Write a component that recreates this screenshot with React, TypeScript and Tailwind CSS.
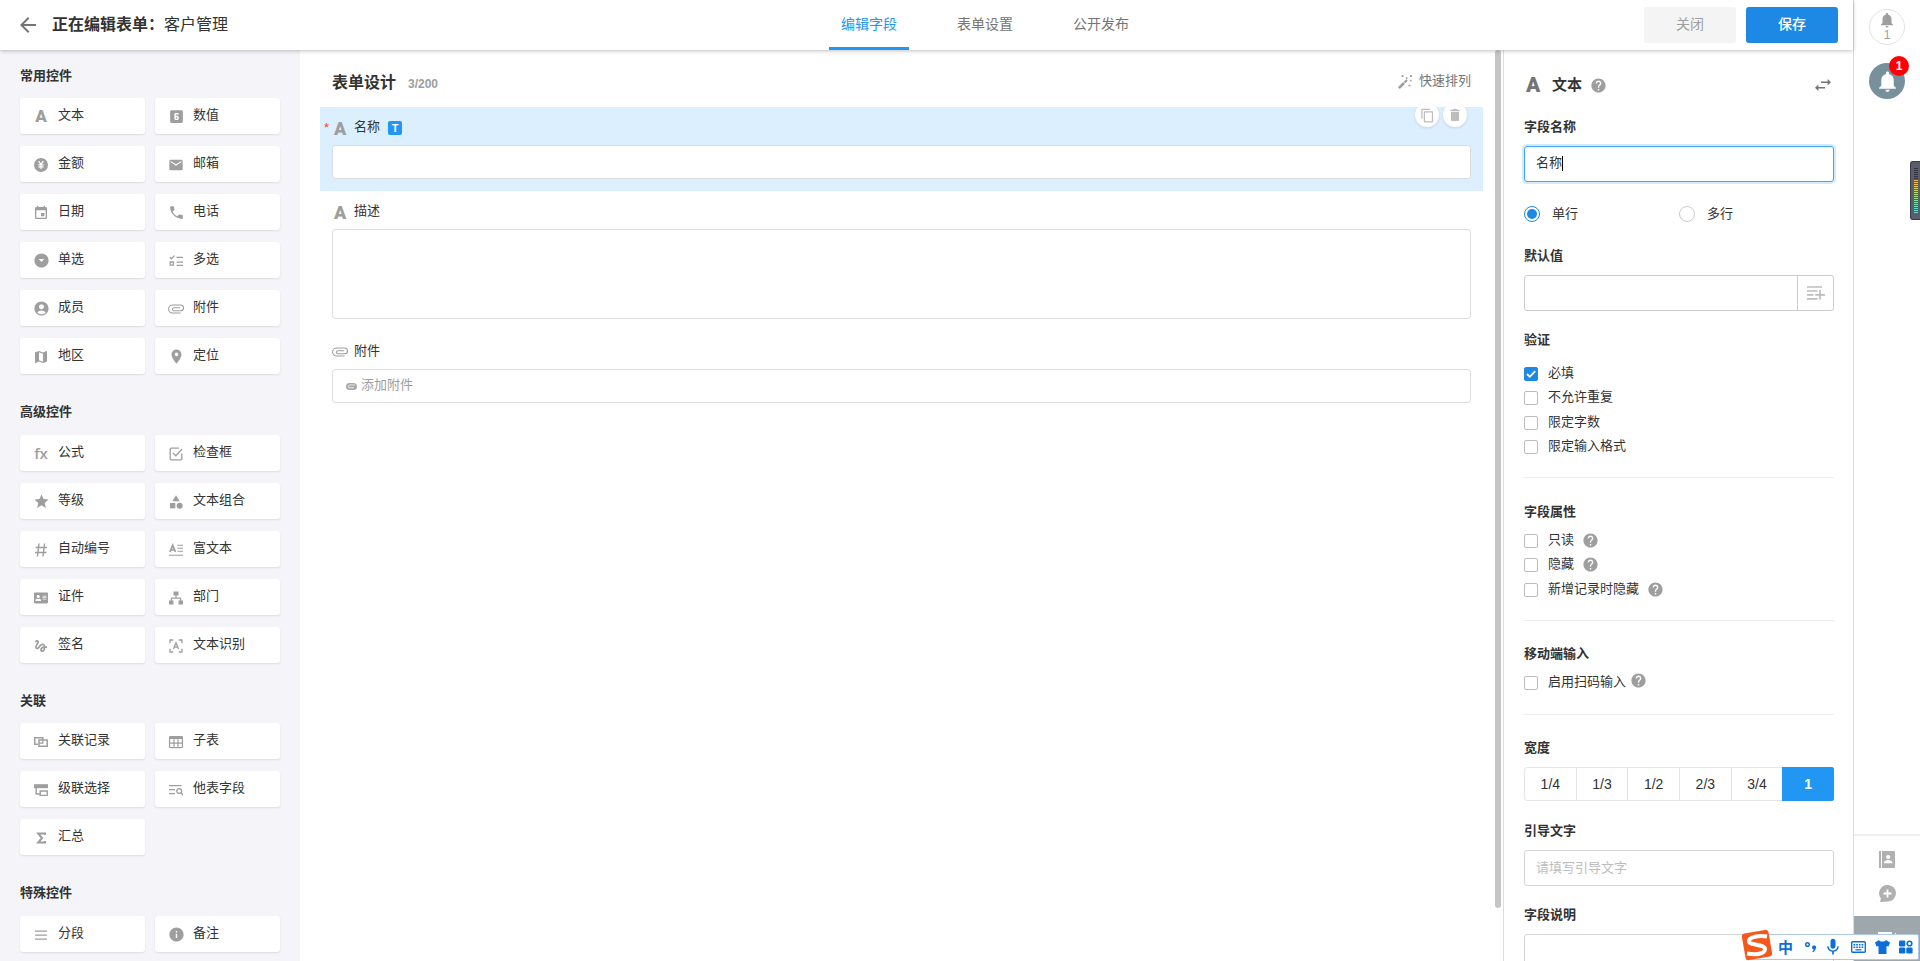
import { useState } from "react";
import type { ReactNode } from "react";
import clsx from "clsx";
import {
  MdAccountCircle,
  MdArrowBack,
  MdArrowDropDownCircle,
  MdCategory,
  MdContentCopy,
  MdDelete,
  MdEmail,
  MdEvent,
  MdGesture,
  MdHelp,
  MdInfo,
  MdLooks6,
  MdMap,
  MdMic,
  MdNotifications,
  MdPhone,
  MdPlace,
  MdStar,
  MdVideocam,
} from "react-icons/md";
import { FaAddressCard } from "react-icons/fa";

type Control = { name: string; icon: ReactNode };
type ControlGroup = { title: string; titleClass: string; controls: Control[] };

function LetterA({ className }: { className?: string }) {
  return <span className={clsx("font-[Roboto,sans-serif] font-black leading-none", className)}>A</span>;
}

function Glyph({ children, size = 14 }: { children: ReactNode; size?: number }) {
  return (
    <svg width={size} height={size} viewBox="0 0 14 14" fill="none" stroke="currentColor" strokeWidth="1.3">
      {children}
    </svg>
  );
}

function ClipIcon({ className }: { className?: string }) {
  return (
    <svg width="16" height="10" viewBox="0 0 16 10" fill="none" stroke="currentColor" strokeWidth="1.1" className={className}>
      <path d="M12.5 9H4.6a4 4 0 0 1 0-8h8a2.8 2.8 0 0 1 0 5.800H6a1.500 1.500 0 0 1 0-3.100h6" />
    </svg>
  );
}

const yenIcon = (
  <Glyph>
    <circle cx="7" cy="7" r="7" fill="currentColor" stroke="none" />
    <path d="M4.6 3.2 7 6.4l2.4-3.2M7 6.4v4.6M4.4 6.8h5.2M4.4 8.8h5.2" stroke="#fff" strokeWidth="1.2" />
  </Glyph>
);

const multiSelectIcon = (
  <Glyph>
    <path d="M.8 3.2l1.6 1.6L5.6 1.6M7.5 3.4H14M7.5 8.2H14M7.5 11.4H14" />
    <path d="M1.2 8h3.2v3.2H1.2z" />
  </Glyph>
);

const checkBoxIcon = (
  <Glyph>
    <path d="M10 1.2H2.2a1 1 0 0 0-1 1v9.6a1 1 0 0 0 1 1h9.6a1 1 0 0 0 1-1V6.5" />
    <path d="M4 6l2.8 2.8L13 2" />
  </Glyph>
);

const hashIcon = (
  <Glyph>
    <path d="M5 .5l-1.600 13M10.600.5L9 13.500M1.500 4.500h11.500M1 9.500h11.500" strokeWidth="1.4" />
  </Glyph>
);

const richTextIcon = (
  <Glyph>
    <path d="M.9 9 3.7 2.2 6.5 9M2 7h3.5" strokeWidth="1.7" />
    <path d="M8.5 2.2H14M8.5 5.2H14M8.5 8.2H14M0 12.2h14" strokeWidth="1.1" />
  </Glyph>
);

const orgIcon = (
  <Glyph>
    <path d="M4.500.500h5v4h-5zM0 9.500h4.500v4H0zM9.500 9.500H14v4H9.500z" fill="currentColor" stroke="none" />
    <path d="M7 4v3M2.400 10V7.200h9.200V10" strokeWidth="1.2" />
  </Glyph>
);

const ocrIcon = (
  <Glyph>
    <path d="M1 4.2V1h3.2M9.8 1H13v3.2M13 9.8V13H9.8M4.2 13H1V9.8" />
    <path d="M4.4 10 7 4l2.6 6M5.3 8.2h3.4" />
  </Glyph>
);

const relationIcon = (
  <Glyph>
    <path d="M4 9.2H.8V2.8h8v2" strokeWidth="1.5" />
    <path d="M5 5h8.2v6.2H5z" strokeWidth="1.5" />
    <path d="M8.8 4.8v3.4H5" />
  </Glyph>
);

const tableIcon = (
  <Glyph>
    <path d="M1.500 1h11A1.500 1.500 0 0 1 14 2.500V4H0V2.500A1.500 1.500 0 0 1 1.500 1z" fill="currentColor" stroke="none" />
    <rect x=".6" y="1.600" width="12.800" height="11" rx="1" strokeWidth="1.2" />
    <path d="M.6 8.200h12.800M5 4v8.600M9 4v8.600" strokeWidth="1.2" />
  </Glyph>
);

const cascadeIcon = (
  <Glyph>
    <path d="M0 1.2h14v4H0z" fill="currentColor" stroke="none" />
    <path d="M2.2 5v6H6M6.2 8h7v4.4h-7z" strokeWidth="1.4" />
  </Glyph>
);

const lookupIcon = (
  <Glyph>
    <path d="M0 2.6h12.5M0 6.6h6M0 10.6h6" />
    <circle cx="10.2" cy="8" r="2.4" />
    <path d="M12 9.8l2.2 2.4" />
  </Glyph>
);

const sumIcon = (
  <Glyph>
    <path d="M11 4V2.500H4.200L8 7l-3.800 4.500H11V10" strokeWidth="2" />
  </Glyph>
);

const dividerIcon = (
  <Glyph>
    <path d="M1 3.2h12M1 7.2h12M1 11.2h12" strokeWidth="1.2" />
  </Glyph>
);

const groups: ControlGroup[] = [
  {
    title: "常用控件",
    titleClass: "mt-[13px] mb-[11px]",
    controls: [
      { name: "文本", icon: <LetterA className="text-[17px]" /> },
      { name: "数值", icon: <MdLooks6 size={17} /> },
      { name: "金额", icon: yenIcon },
      { name: "邮箱", icon: <MdEmail size={16} /> },
      { name: "日期", icon: <MdEvent size={16} /> },
      { name: "电话", icon: <MdPhone size={17} /> },
      { name: "单选", icon: <MdArrowDropDownCircle size={17} /> },
      { name: "多选", icon: multiSelectIcon },
      { name: "成员", icon: <MdAccountCircle size={17} /> },
      { name: "附件", icon: <ClipIcon /> },
      { name: "地区", icon: <MdMap size={16} /> },
      { name: "定位", icon: <MdPlace size={17} /> },
    ],
  },
  {
    title: "高级控件",
    titleClass: "mt-[25px] mb-3",
    controls: [
      { name: "公式", icon: <span className="font-['Open_Sans',sans-serif] text-[15px] font-semibold leading-none">fx</span> },
      { name: "检查框", icon: checkBoxIcon },
      { name: "等级", icon: <MdStar size={17} /> },
      { name: "文本组合", icon: <MdCategory size={16} /> },
      { name: "自动编号", icon: hashIcon },
      { name: "富文本", icon: richTextIcon },
      { name: "证件", icon: <FaAddressCard size={14} /> },
      { name: "部门", icon: orgIcon },
      { name: "签名", icon: <MdGesture size={16} /> },
      { name: "文本识别", icon: ocrIcon },
    ],
  },
  {
    title: "关联",
    titleClass: "mt-[25px] mb-[11px]",
    controls: [
      { name: "关联记录", icon: relationIcon },
      { name: "子表", icon: tableIcon },
      { name: "级联选择", icon: cascadeIcon },
      { name: "他表字段", icon: lookupIcon },
      { name: "汇总", icon: sumIcon },
    ],
  },
  {
    title: "特殊控件",
    titleClass: "mt-[25px] mb-3",
    controls: [
      { name: "分段", icon: dividerIcon },
      { name: "备注", icon: <MdInfo size={17} /> },
    ],
  },
];

const tabs = ["编辑字段", "表单设置", "公开发布"];
const widths = ["1/4", "1/3", "1/2", "2/3", "3/4", "1"];

function Header() {
  const [active, setActive] = useState(tabs[0]);

  return (
    <header className="relative z-10 flex h-[50px] shrink-0 bg-white shadow-[0_1px_4px_rgba(0,0,0,0.25)]">
      <div className="flex w-[829px] items-center pl-4 text-[16px] text-[#333]">
        <MdArrowBack size={24} className="mr-3 text-[#757575]" />
        <span className="font-bold">正在编辑表单：</span>
        <span>客户管理</span>
      </div>
      <nav className="flex flex-1 gap-9">
        {tabs.map((tab) => (
          <button
            key={tab}
            onClick={() => setActive(tab)}
            className={clsx(
              "h-[50px] w-20 border-b-[3px] pt-[2px] text-[14px]",
              active === tab ? "border-[#2196f3] text-[#2196f3]" : "border-transparent text-[#757575]"
            )}
          >
            {tab}
          </button>
        ))}
      </nav>
      <div className="flex items-center gap-[10px] pr-[15px] text-[14px]">
        <button className="h-9 w-[92px] rounded-[3px] bg-[#f4f4f4] pb-px text-[#9e9e9e]">关闭</button>
        <button className="h-9 w-[92px] rounded-[3px] bg-[#1e88e5] pb-px font-medium text-white">保存</button>
      </div>
    </header>
  );
}

function Sidebar() {
  return (
    <aside className="w-[300px] shrink-0 overflow-hidden bg-[#f4f4f9] px-5">
      {groups.map((group) => (
        <section key={group.title}>
          <h2 className={clsx("h-6 text-[13px] font-bold leading-[25px] text-[#333]", group.titleClass)}>
            {group.title}
          </h2>
          <div className="grid grid-cols-[125px_125px] gap-x-[10px] gap-y-3">
            {group.controls.map((control) => (
              <div
                key={control.name}
                className="flex h-9 items-center rounded-[3px] bg-white pl-3 shadow-[0_1px_2px_rgba(0,0,0,0.1)]"
              >
                <span className="mr-2 flex w-[18px] shrink-0 items-center justify-center pt-px text-[#9e9e9e]">
                  {control.icon}
                </span>
                <span className="pb-[2px] text-[13px] text-[#333]">{control.name}</span>
              </div>
            ))}
          </div>
        </section>
      ))}
    </aside>
  );
}

function FormCanvas() {
  return (
    <main className="flex min-w-0 flex-1 bg-white">
      <div className="flex-1 pl-5 pr-3">
        <div className="flex h-[57px] items-center pl-3 pr-3 pt-[6px]">
          <h1 className="pt-[2px] text-[16px] font-bold text-[#333]">表单设计</h1>
          <span className="ml-3 pt-1 text-[12px] font-bold text-[#9e9e9e]">3/200</span>
          <button className="ml-auto flex items-center pb-px text-[13px] text-[#757575]">
            <svg width="14" height="14" viewBox="0 0 14 14" className="mt-[2px] mr-[7px] text-[#9e9e9e]" stroke="currentColor">
              <path d="M.9 13.100 6 8" strokeWidth="2.600" />
              <path d="M6.500 7.500 9 5" strokeWidth="2.200" />
              <path d="M3.500 1.200h2M12 1.200h2M12 5.500h1.600M7 1.200h0M10.500 10.500h2M8 3.200h1.400" strokeWidth="1.700" />
            </svg>
            快速排列
          </button>
        </div>

        <div className="relative h-[84px] bg-[#dceffe] px-3 pt-[10px]">
          <div className="flex h-[22px] items-center">
            <span className="absolute left-[4px] text-[13px] text-[#f44336]">*</span>
            <LetterA className="w-[22px] pl-[2px] pt-px text-[18px] text-[#9e9e9e]" />
            <span className="pb-[2px] text-[13px] text-[#333]">名称</span>
            <span className="ml-2 flex size-[14px] items-center justify-center rounded-[2px] bg-[#2196f3] text-[11px] font-bold leading-none text-white">
              T
            </span>
          </div>
          <input className="mt-[6px] block h-[34px] w-full rounded-[3px] border border-[#ddd] bg-white" />
          <div className="absolute -top-1 right-4 flex gap-1">
            <button className="flex size-6 items-center justify-center rounded-full bg-white text-[#bdbdbd] shadow-[0_1px_3px_rgba(0,0,0,0.12)]">
              <MdContentCopy size={15} />
            </button>
            <button className="flex size-6 items-center justify-center rounded-full bg-white text-[#bdbdbd] shadow-[0_1px_3px_rgba(0,0,0,0.12)]">
              <MdDelete size={16} />
            </button>
          </div>
        </div>

        <div className="px-3 pt-[10px]">
          <div className="flex h-[22px] items-center">
            <LetterA className="w-[22px] pl-[2px] pt-px text-[18px] text-[#9e9e9e]" />
            <span className="pb-[2px] text-[13px] text-[#333]">描述</span>
          </div>
          <div className="mt-[6px] h-[90px] rounded-[3px] border border-[#ddd]" />
        </div>

        <div className="px-3 pt-[22px]">
          <div className="flex h-[22px] items-center">
            <ClipIcon className="mr-[6px] text-[#9e9e9e]" />
            <span className="pb-[2px] text-[13px] text-[#333]">附件</span>
          </div>
          <div className="mt-[6px] flex h-[34px] items-center rounded-[3px] border border-[#ddd] pl-[13px] text-[13px] text-[#9e9e9e]">
            <svg width="11" height="7" viewBox="0 0 11 7" className="mr-1">
              <rect width="11" height="7" rx="3.5" fill="#aaa" />
              <path d="M9 2H3.8a1.4 1.4 0 0 0 0 2.8H8" fill="none" stroke="#fff" strokeWidth=".7" />
            </svg>
            <span className="pb-[2px]">添加附件</span>
          </div>
        </div>
      </div>
      <div className="w-2 shrink-0 pr-[2px]">
        <div className="h-[858px] rounded-[3px] bg-[#c5c5c5]" />
      </div>
    </main>
  );
}

function Check({ label, checked, help, className }: { label: string; checked?: boolean; help?: string; className?: string }) {
  return (
    <div className={clsx("flex items-start", className)}>
      <span
        className={clsx(
          "flex size-[14px] items-center justify-center rounded-[2px] border",
          checked ? "border-[#1e88e5] bg-[#1e88e5]" : "border-[#bdbdbd] bg-white"
        )}
      >
        {checked && (
          <svg width="12" height="12" viewBox="0 0 12 12" fill="none" stroke="#fff" strokeWidth="1.8">
            <path d="M2 6l2.8 2.8L10.2 3.2" />
          </svg>
        )}
      </span>
      <span className="-mt-[3px] ml-[10px] text-[13px] leading-[18px]">{label}</span>
      {help && <MdHelp size={17} className={clsx("text-[#9e9e9e]", help)} />}
    </div>
  );
}

function Title({ children, className }: { children: ReactNode; className: string }) {
  return <h3 className={clsx("h-5 text-[13px] font-bold leading-5", className)}>{children}</h3>;
}

function FieldSettings() {
  const [width, setWidth] = useState("1");

  return (
    <aside className="w-[350px] shrink-0 overflow-hidden border-l border-[#ddd] bg-white pl-5 pr-[19px] text-[#333]">
      <div className="mt-6 flex h-[22px] items-center">
        <LetterA className="w-7 pl-[2px] pt-px text-[21px] text-[#757575]" />
        <span className="text-[15px] font-bold">文本</span>
        <MdHelp size={17} className="ml-2 text-[#9e9e9e]" />
        <svg width="16" height="12" viewBox="0 0 16 12" className="ml-auto mr-[3px] text-[#757575]" fill="currentColor">
          <path d="M12.6 0 16 3.3l-3.4 3.3V4.1H6V2.6h6.6zM3.4 5.4v2.5H10v1.5H3.4V12L0 8.7z" />
        </svg>
      </div>

      <Title className="mt-[21px]">字段名称</Title>
      <div className="mt-[9px] flex h-9 items-center rounded-[3px] border border-[#42a5f5] pl-[11px] pb-[2px] text-[13px] shadow-[0_0_0_2px_rgba(33,150,243,0.2)]">
        名称
        <span className="h-[15px] w-px bg-black" />
      </div>

      <div className="mt-6 flex h-4 items-center text-[13px]">
        <span className="mr-3 flex size-4 items-center justify-center rounded-full border border-[#1e88e5]">
          <span className="size-[10px] rounded-full bg-[#1e88e5]" />
        </span>
        <span className="w-[127px]">单行</span>
        <span className="mr-3 size-4 rounded-full border border-[#ccc]" />
        多行
      </div>

      <Title className="mt-6">默认值</Title>
      <div className="mt-[9px] flex h-9 rounded-[3px] border border-[#ccc]">
        <span className="flex-1" />
        <span className="flex w-9 items-center justify-center border-l border-[#ccc] text-[#bdbdbd]">
          <svg width="18" height="16" viewBox="0 0 18 16" fill="none" stroke="currentColor" strokeWidth="1.7">
            <path d="M0 2h15M0 6h10.5M0 9.8h6.5M0 13.8h10.5M13 5v9.5M8.2 9.8H18" />
          </svg>
        </span>
      </div>

      <Title className="mt-[19px]">验证</Title>
      <Check className="mt-[17px] h-6" label="必填" checked />
      <Check className="h-[25px]" label="不允许重复" />
      <Check className="h-6" label="限定字数" />
      <Check className="h-[14px]" label="限定输入格式" />
      <div className="mt-[23px] border-t border-[#ececec]" />

      <Title className="mt-6">字段属性</Title>
      <Check className="mt-3 h-6" label="只读" help="ml-2 -mt-[2px]" />
      <Check className="h-[25px]" label="隐藏" help="ml-2 -mt-[2px]" />
      <Check className="h-[14px]" label="新增记录时隐藏" help="ml-2 -mt-[2px]" />
      <div className="mt-[23px] border-t border-[#ececec]" />

      <Title className="mt-[23px]">移动端输入</Title>
      <Check className="mt-3 h-[14px]" label="启用扫码输入" help="ml-1 -mt-[4px]" />
      <div className="mt-6 border-t border-[#ececec]" />

      <Title className="mt-[23px]">宽度</Title>
      <div className="mt-[9px] grid h-[34px] grid-cols-6 overflow-hidden rounded-[3px] text-[14px]">
        {widths.map((w) => (
          <button
            key={w}
            onClick={() => setWidth(w)}
            className={clsx(
              "border-y border-l first:rounded-l-[3px] last:border-r",
              width === w ? "border-[#2196f3] bg-[#2196f3] font-bold text-white" : "border-[#e5e5e5]"
            )}
          >
            {w}
          </button>
        ))}
      </div>

      <Title className="mt-5">引导文字</Title>
      <input
        placeholder="请填写引导文字"
        className="mt-[9px] block h-9 w-full rounded-[3px] border border-[#d5d5d5] pb-[2px] pl-[11px] text-[13px] placeholder:text-[#bdbdbd]"
      />

      <Title className="mt-[19px]">字段说明</Title>
      <div className="mt-[9px] h-20 rounded-[3px] border border-[#d5d5d5]" />
    </aside>
  );
}

function Rail() {
  return (
    <aside className="flex w-[67px] shrink-0 flex-col items-center border-l border-[#ddd] bg-white">
      <div className="mt-[9px] flex size-9 flex-col items-center rounded-full border border-[#e2e2e2] pt-px text-[#9e9e9e]">
        <MdNotifications size={18} />
        <span className="text-[12px] leading-[13px]">1</span>
      </div>
      <div className="relative mt-[18px] flex size-9 items-center justify-center rounded-full bg-[#78909c] text-white">
        <MdNotifications size={25} />
        <span className="absolute -top-[7px] -right-[4px] flex size-5 items-center justify-center rounded-full bg-[#f00] text-[12px] font-bold">
          1
        </span>
      </div>
      <div className="mt-auto flex h-[82px] w-full flex-col items-center border-t-2 border-[#f0f0f0] pt-[15px] text-[#b0b0b0]">
        <svg width="16" height="17" viewBox="0 0 16 17" fill="currentColor">
          <path d="M0 0h2v17H0zM3 0h12a1 1 0 0 1 1 1v15a1 1 0 0 1-1 1H3z" />
          <circle cx="9.2" cy="6" r="2.1" fill="#fff" />
          <path d="M4.8 12.2c0-2.4 2.5-3.3 4.4-3.3s4.4.9 4.4 3.3z" fill="#fff" />
        </svg>
        <svg width="17" height="17" viewBox="0 0 17 17" fill="currentColor" className="mt-[17px]">
          <path d="M8.5 0A8.3 8.3 0 0 1 17 8.3 8.3 8.3 0 0 1 8.5 16.5L1 17l.9-3.6A8.3 8.3 0 0 1 8.5 0z" />
          <path d="M8.5 4.5v8M4.5 8.5h8" stroke="#fff" strokeWidth="1.8" />
        </svg>
      </div>
      <div className="flex h-[45px] w-full justify-center bg-[#9ea7ac] pt-[10px] text-white">
        <MdVideocam size={24} />
      </div>
    </aside>
  );
}

const meterColors = [
  "bg-[#34343f]", "bg-[#34343f]", "bg-[#34343f]", "bg-[#34343f]", "bg-[#34343f]", "bg-[#34343f]",
  "bg-[#efb04a]", "bg-[#ecbd50]", "bg-[#e8c653]", "bg-[#e2d057]", "bg-[#d8d85b]", "bg-[#cbdc60]",
  "bg-[#bde068]", "bg-[#aee370]", "bg-[#a0e47a]", "bg-[#92e586]", "bg-[#84e592]", "bg-[#78e59f]",
  "bg-[#6ee4ad]", "bg-[#66e2bb]", "bg-[#60dfc8]", "bg-[#5cdcd2]", "bg-[#5cdcd2]",
];

function LevelMeter() {
  return (
    <div className="absolute right-0 top-[161px] z-20 flex h-[59px] w-[10px] flex-col gap-px rounded-l-[3px] border border-r-0 border-[#3b3b48] bg-[#5b5d6d] pl-[3px] pt-[6px]">
      {meterColors.map((color, i) => (
        <span key={i} className={clsx("h-px w-[4px] shrink-0", color)} />
      ))}
    </div>
  );
}

function ImeBar() {
  return (
    <div className="absolute right-[1px] top-[934px] z-20 flex h-[26px] w-[170px] items-center rounded-[2px] border border-[#afc8e6] bg-white text-[#0a6fdb]">
      <svg width="32" height="32" viewBox="0 0 32 32" className="absolute -left-[9px] -top-[6px]">
        <rect x="2.5" y="2.5" width="27" height="27" rx="3" fill="#f4581c" transform="rotate(-10 16 16)" />
        <path
          d="M26 7.500C18 6 7.500 8 8 12.500c.5 4 16 2.500 16 7.500 0 5-9 6-18 4.500"
          fill="none"
          stroke="#fff"
          strokeWidth="4"
        />
      </svg>
      <div className="flex w-full items-center pl-[28px]">
        <span className="w-4 text-[15px] font-bold leading-none">中</span>
        <svg width="14" height="14" viewBox="0 0 14 14" className="ml-[10px]">
          <circle cx="3.5" cy="4.5" r="1.8" fill="none" stroke="currentColor" strokeWidth="1.5" />
          <path d="M8 7.5a2 2 0 1 1 3.8.8c-.3 2-1.5 3.4-3 4l-.5-.9c.8-.5 1.3-1.1 1.4-1.9A2 2 0 0 1 8 7.5z" fill="currentColor" />
        </svg>
        <MdMic size={20} className="ml-[5px]" />
        <svg width="15" height="12" viewBox="0 0 15 12" className="ml-[8px]">
          <rect x=".7" y=".7" width="13.600" height="10.600" rx="1" fill="#fff" stroke="currentColor" strokeWidth="1.4" />
          <path d="M2.500 3.700h10M2.500 6.200h10" stroke="currentColor" strokeWidth="1.500" strokeDasharray="1.700 1" />
          <path d="M4.500 8.800h6" stroke="currentColor" strokeWidth="1.300" />
        </svg>
        <svg width="15" height="14" viewBox="0 0 15 14" fill="currentColor" className="ml-[9px]">
          <path d="M4 0c.8 2 6.2 2 7 0l4 2.5-1.5 4-2-.5v8h-8V6l-2 .5L0 2.5z" />
        </svg>
        <svg width="14" height="14" viewBox="0 0 14 14" fill="currentColor" className="ml-[9px]">
          <rect y=".5" width="6.300" height="6" rx="1.2" />
          <rect y="7.500" width="6.300" height="6" rx="1.2" />
          <rect x="7.300" y="7.500" width="6.300" height="6" rx="1.2" />
          <circle cx="10.500" cy="3.500" r="2.300" fill="none" stroke="currentColor" strokeWidth="1.6" />
        </svg>
      </div>
    </div>
  );
}

export default function App() {
  return (
    <div className="relative flex h-[961px] w-[1920px] overflow-hidden bg-white font-['Liberation_Sans','Noto_Sans_CJK_SC',sans-serif]">
      <div className="flex min-w-0 flex-1 flex-col">
        <Header />
        <div className="flex min-h-0 flex-1">
          <Sidebar />
          <FormCanvas />
          <FieldSettings />
        </div>
      </div>
      <Rail />
      <LevelMeter />
      <ImeBar />
    </div>
  );
}
